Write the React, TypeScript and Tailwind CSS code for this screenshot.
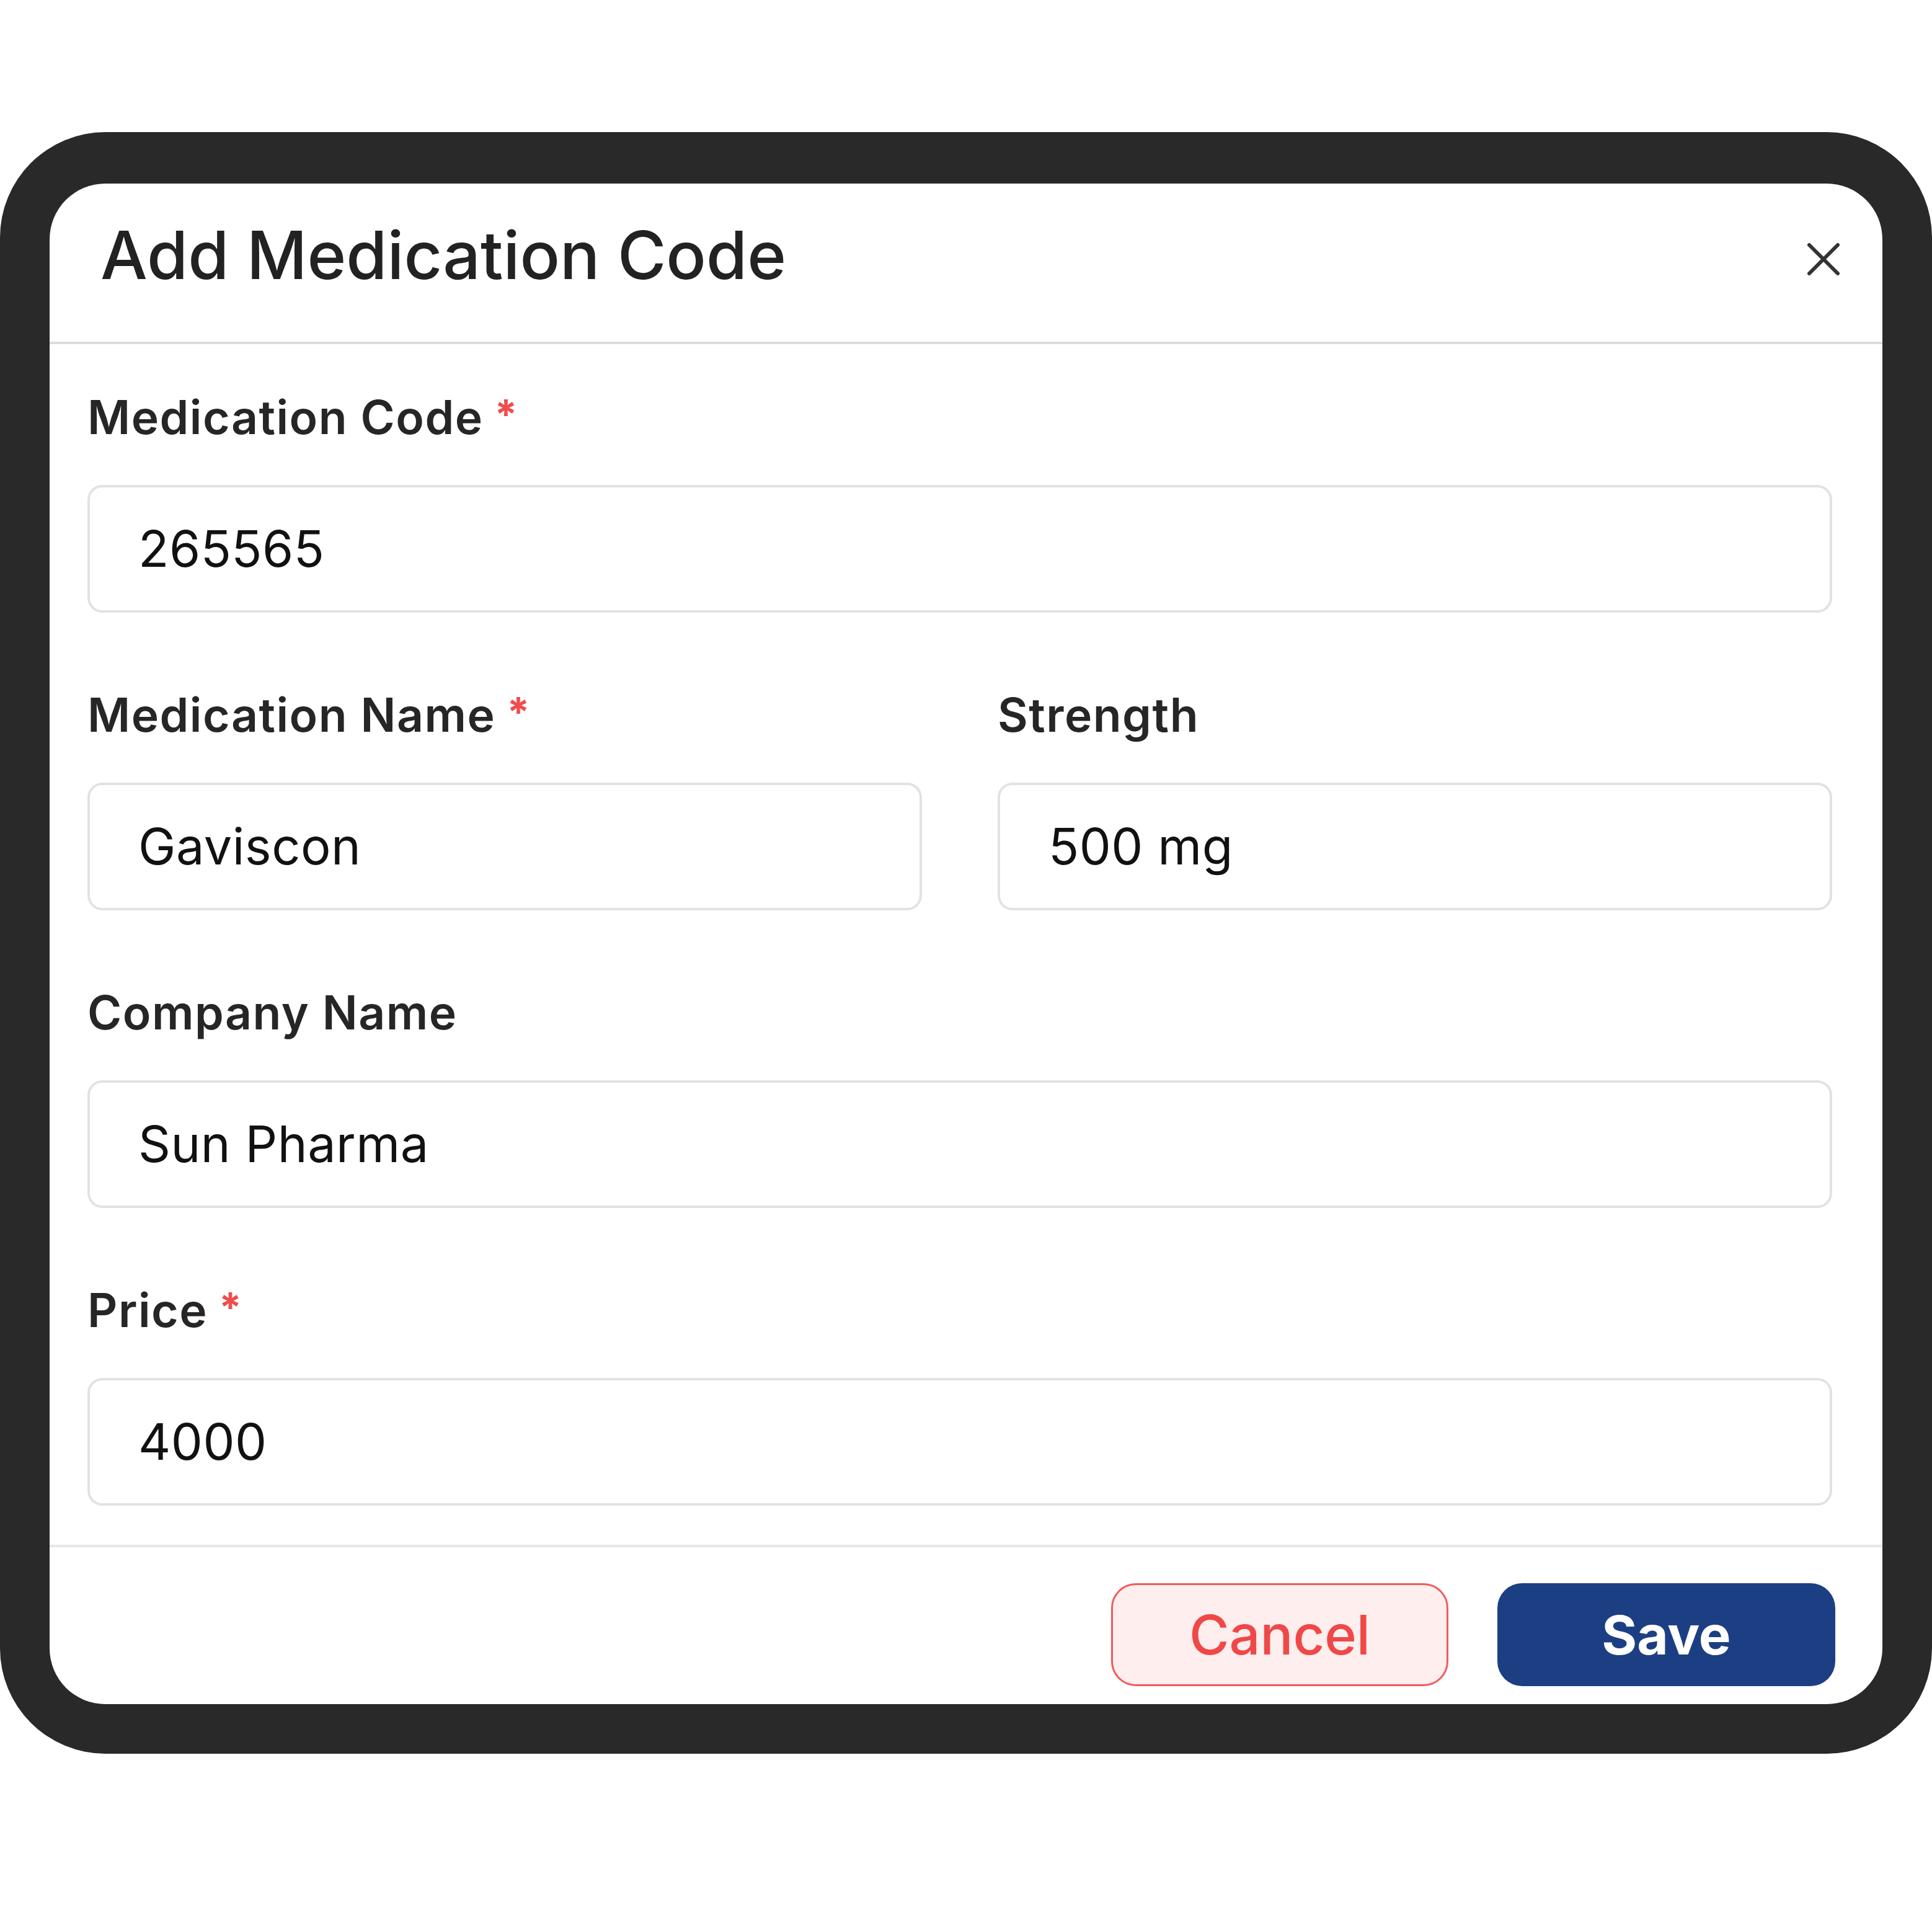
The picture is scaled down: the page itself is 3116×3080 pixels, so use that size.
import React from "react";

const font = { fontFamily: "Inter, 'Noto Sans', sans-serif" };

const Label = ({ text, required }: { text: string; required?: boolean }) => (
  <div className="flex items-start text-[75px] leading-none font-semibold tracking-[1.5px] text-[#262626] mb-[72px]">
    <span>{text}</span>
    {required && (
      <span className="ml-[18px] text-[#f24b4b] text-[66px] leading-none font-bold">*</span>
    )}
  </div>
);

const Input = ({ value }: { value: string }) => (
  <div className="h-[206px] w-full border-4 border-[#e2e2e2] rounded-[24px] flex items-center pl-[78px] text-[81px] tracking-[0.5px] text-[#111] leading-none">
    {value}
  </div>
);

const App = () => {
  return (
    <div className="w-full h-[3080px] bg-white pt-[213px] overflow-hidden" style={font}>
      <div className="bg-[#292929] rounded-[170px] px-[80px] pt-[83px] pb-[80px]">
        <div className="bg-white rounded-[90px] overflow-hidden">
          {/* header */}
          <div className="h-[259px] flex items-center justify-between pl-[82px] pr-[68px] border-b-4 border-[#dcdcdc]">
            <h1 className="text-[107px] leading-none font-medium text-[#222] mb-[24px]">
              Add Medication Code
            </h1>
            <svg width="54" height="54" viewBox="0 0 54 54" className="mb-[12px]">
              <path d="M4 4 L50 50 M50 4 L4 50" stroke="#333" strokeWidth="6" strokeLinecap="round" />
            </svg>
          </div>

          {/* body */}
          <div className="pl-[61px] pr-[81px] pt-[80px] pb-[63px] flex flex-col gap-[127px]">
            <div>
              <Label text="Medication Code" required />
              <Input value="265565" />
            </div>
            <div className="grid grid-cols-2 gap-x-[122px]">
              <div>
                <Label text="Medication Name" required />
                <Input value="Gaviscon" />
              </div>
              <div>
                <Label text="Strength" />
                <Input value="500 mg" />
              </div>
            </div>
            <div>
              <Label text="Company Name" />
              <Input value="Sun Pharma" />
            </div>
            <div>
              <Label text="Price" required />
              <Input value="4000" />
            </div>
          </div>

          {/* footer */}
          <div className="border-t-4 border-[#e6e6e6] flex justify-end gap-[79px] pt-[58px] pb-[29px] pr-[76px]">
            <button className="w-[544px] h-[166px] rounded-[40px] border-[3px] border-[#f25a5a] bg-[#feeeee] text-[#f04848] text-[88px] font-medium leading-none">
              Cancel
            </button>
            <button className="w-[545px] h-[166px] rounded-[40px] bg-[#1c3f84] text-white text-[87px] font-bold leading-none">
              Save
            </button>
          </div>
        </div>
      </div>
    </div>
  );
};

export default App;
